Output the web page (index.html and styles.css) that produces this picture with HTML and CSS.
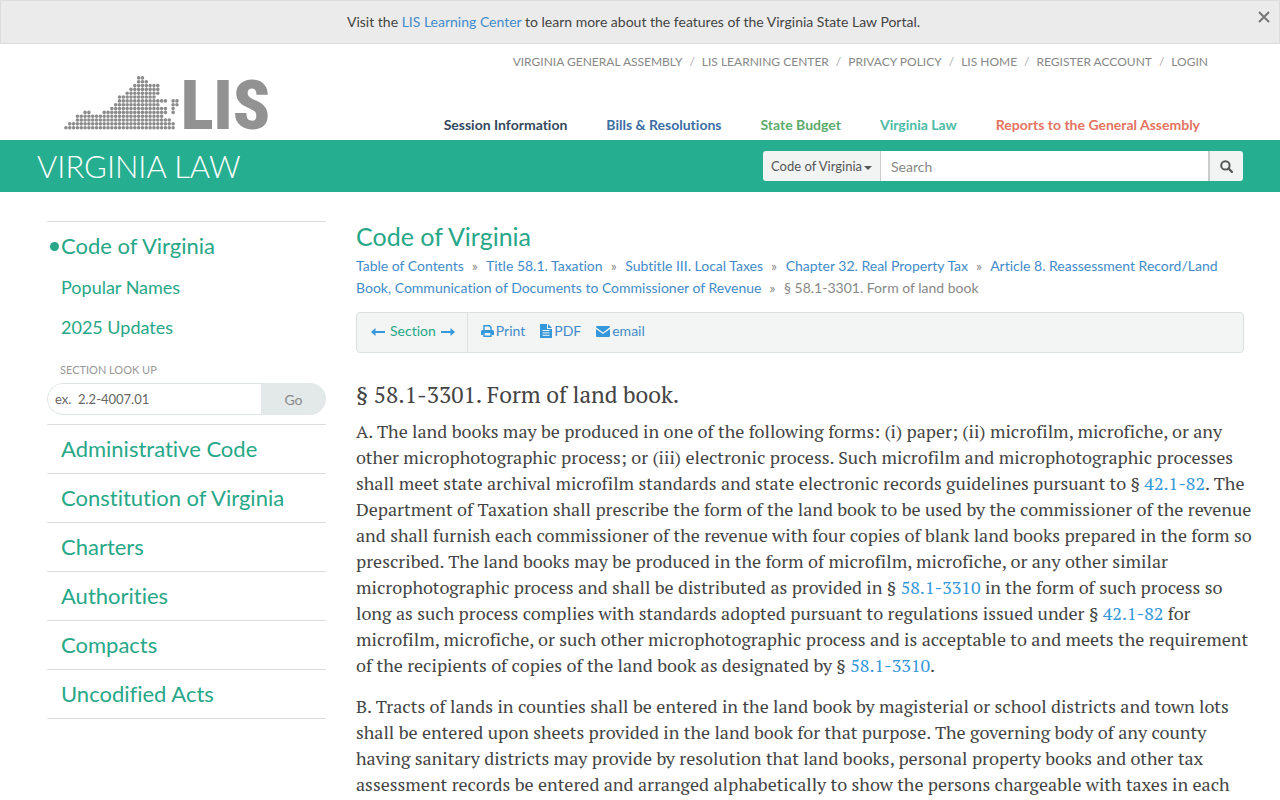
FILE: index.html
```html
<!DOCTYPE html>
<html lang="en">
<head>
  <meta charset="UTF-8" />
  <meta name="viewport" content="width=device-width, initial-scale=1.0"/>
  <title>§ 58.1-3301. Form of land book</title>
  <link rel="stylesheet" href="styles.css">
</head>
<body>
  <div class="announcement">
    <p>Visit the <a href="#">LIS Learning Center</a> to learn more about the features of the Virginia State Law Portal.</p>
    <button type="button" class="close" aria-label="Close">
      <svg width="12" height="12" viewBox="0 0 12 12"><path d="M1 1L11 11M11 1L1 11" stroke="#777" stroke-width="2"/></svg>
    </button>
  </div>

  <header class="header">
    <a href="#" class="logo" aria-label="LIS">
      <!-- dotted state map -->
      <svg class="logo-map" width="116" height="54" viewBox="-5 -5 303 141">
        <path d="M190 0h11M190 10h21M180 20h61M170 30h71M160 40h81M140 50h91M140 60h121M280 60h11M130 70h111M280 70h11M120 80h141M280 80h1M50 90h11M100 90h161M280 90h1M30 100h221M30 110h241M10 120h271M0 130h281" fill="none" stroke="#8c8c8c" stroke-width="9.4" stroke-linecap="round" stroke-dasharray="0 10"/>
      </svg>
      <span class="logo-text">LIS</span>
    </a>
    <div class="header-nav">
      <ul class="top-links">
        <li><a href="#">Virginia General Assembly</a></li>
        <li><a href="#">LIS Learning Center</a></li>
        <li><a href="#">Privacy Policy</a></li>
        <li><a href="#">LIS Home</a></li>
        <li><a href="#">Register Account</a></li>
        <li><a href="#">Login</a></li>
      </ul>
      <nav class="portals">
        <a href="#" class="session">Session Information</a>
        <a href="#" class="bills">Bills &amp; Resolutions</a>
        <a href="#" class="budget">State Budget</a>
        <a href="#" class="law">Virginia Law</a>
        <a href="#" class="reports">Reports to the General Assembly</a>
      </nav>
    </div>
  </header>

  <div class="banner">
    <a href="#" class="banner-title">VIRGINIA LAW</a>
    <form class="search">
      <button type="button" class="search-type">Code of Virginia<span class="caret"></span></button>
      <input type="text" placeholder="Search" aria-label="Search">
      <button type="submit" class="search-go" aria-label="Search">
        <svg width="13" height="13" viewBox="0 0 13 13"><circle cx="5.4" cy="5.4" r="4.2" fill="none" stroke="#555" stroke-width="2"/><path d="M8.5 8.5L12 12" stroke="#555" stroke-width="2.4" stroke-linecap="round"/></svg>
      </button>
    </form>
  </div>

  <div class="page">
    <aside class="sidebar">
      <div class="side-group">
        <a href="#" class="side-link current">Code of Virginia</a>
        <a href="#" class="side-sub">Popular Names</a>
        <a href="#" class="side-sub">2025 Updates</a>
        <form class="lookup">
          <label for="lookup">SECTION LOOK UP</label>
          <div class="lookup-row">
            <input id="lookup" type="text" placeholder="ex.  2.2-4007.01">
            <button type="submit">Go</button>
          </div>
        </form>
      </div>
      <a href="#" class="side-link">Administrative Code</a>
      <a href="#" class="side-link">Constitution of Virginia</a>
      <a href="#" class="side-link">Charters</a>
      <a href="#" class="side-link">Authorities</a>
      <a href="#" class="side-link">Compacts</a>
      <a href="#" class="side-link">Uncodified Acts</a>
    </aside>

    <main class="content">
      <h2>Code of Virginia</h2>
      <div class="breadcrumbs">
        <a href="#">Table of Contents</a><span>»</span>
        <a href="#">Title 58.1. Taxation</a><span>»</span>
        <a href="#">Subtitle III. Local Taxes</a><span>»</span>
        <a href="#">Chapter 32. Real Property Tax</a><span>»</span>
        <a href="#">Article 8. Reassessment Record/Land Book, Communication of Documents to Commissioner of Revenue</a><span>»</span>
        § 58.1-3301. Form of land book
      </div>

      <div class="toolbar">
        <div class="section-nav">
          <a href="#" aria-label="Previous section"><svg width="14" height="8" viewBox="0 0 14 8"><path d="M0 4L4.5 0V3H14V5H4.5V8Z" fill="#3498db"/></svg></a>
          <span>Section</span>
          <a href="#" aria-label="Next section"><svg width="14" height="8" viewBox="0 0 14 8"><path d="M14 4L9.5 0V3H0V5H9.5V8Z" fill="#3498db"/></svg></a>
        </div>
        <div class="tools">
          <a href="#">
            <svg width="13" height="12" viewBox="0 0 13 12"><path d="M3 6V0.8H8.4L10 2.4V6" fill="none" stroke="#3498db" stroke-width="1.4"/><path d="M1.5 5H11.5Q13 5 13 6.5V10H10.5V8H2.5V10H0V6.5Q0 5 1.5 5Z" fill="#3498db"/><path d="M3 8V11.3H10V8" fill="none" stroke="#3498db" stroke-width="1.4"/></svg>
            Print</a>
          <a href="#">
            <svg width="12" height="14" viewBox="0 0 12 14"><path d="M0 0H7V5H12V14H0ZM8 0L12 4H8Z" fill="#3498db"/><path d="M2.5 6.5H9.5M2.5 8.9H9.5M2.5 11.3H9.5" stroke="#f2f5f4"/></svg>
            PDF</a>
          <a href="#">
            <svg width="14" height="11" viewBox="0 0 14 11"><path d="M0 1Q0 0 1 0H13Q14 0 14 1.3L7 6.5L0 1.3ZM0 3L7 8L14 3V10Q14 11 13 11H1Q0 11 0 10Z" fill="#3498db"/></svg>
            email</a>
        </div>
      </div>

      <article class="statute">
        <h1>§ 58.1-3301. Form of land book.</h1>
        <p>A. The land books may be produced in one of the following forms: (i) paper; (ii) microfilm, microfiche, or any other microphotographic process; or (iii) electronic process. Such microfilm and microphotographic processes shall meet state archival microfilm standards and state electronic records guidelines pursuant to § <a href="#">42.1-82</a>. The Department of Taxation shall prescribe the form of the land book to be used by the commissioner of the revenue and shall furnish each commissioner of the revenue with four copies of blank land books prepared in the form so prescribed. The land books may be produced in the form of microfilm, microfiche, or any other similar microphotographic process and shall be distributed as provided in § <a href="#">58.1-3310</a> in the form of such process so long as such process complies with standards adopted pursuant to regulations issued under § <a href="#">42.1-82</a> for microfilm, microfiche, or such other microphotographic process and is acceptable to and meets the requirement of the recipients of copies of the land book as designated by § <a href="#">58.1-3310</a>.</p>
        <p>B. Tracts of lands in counties shall be entered in the land book by magisterial or school districts and town lots shall be entered upon sheets provided in the land book for that purpose. The governing body of any county having sanitary districts may provide by resolution that land books, personal property books and other tax assessment records be entered and arranged alphabetically to show the persons chargeable with taxes in each</p>
      </article>
    </main>
  </div>
</body>
</html>
```
FILE: styles.css
```css
* {
  box-sizing: border-box;
}

body {
  margin: 0;
  font-family: Lato, sans-serif;
  font-size: 14px;
  font-variant-ligatures: none;
  color: #444;
  background: #fff;
}

a {
  color: #428bca;
  text-decoration: none;
}

button, input {
  font-family: inherit;
  font-size: 14px;
}

.announcement {
  display: flex;
  height: 44px;
  background: #ebebeb;
  border: 1px solid #dcdcdc;
}

.announcement p {
  flex: 1;
  margin: 0;
  padding-left: 8px;
  line-height: 42px;
  text-align: center;
}

.close {
  display: flex;
  padding: 10px 9px 0 0;
  border: none;
  background: none;
  cursor: pointer;
}

.header {
  display: flex;
  justify-content: space-between;
  height: 96px;
  padding: 0 72px 0 64px;
}

.logo {
  display: flex;
  align-items: flex-end;
  gap: 1px;
  padding-bottom: 10px;
}

.logo-text {
  font-family: "Roboto Condensed", "Open Sans Condensed", Lato, sans-serif;
  font-size: 68px;
  font-weight: 900;
  line-height: 47px;
  color: #929292;
}

.header-nav {
  display: flex;
  flex-direction: column;
  justify-content: space-between;
  align-items: flex-end;
  padding: 10px 0 6px;
}

.top-links {
  display: flex;
  margin: 0;
  padding: 0;
  list-style: none;
  font-size: 12px;
  line-height: 16px;
  text-transform: uppercase;
}

.top-links a {
  color: #888;
}

.top-links li + li::before {
  content: "/";
  padding: 0 7px;
  color: #aaa;
}

.portals {
  display: flex;
  gap: 39px;
  padding-right: 8px;
  font-weight: bold;
  line-height: 18px;
}

.session { color: #34495e; }
.bills { color: #3c6ea5; }
.budget { color: #5cab6b; }
.law { color: #4dbba5; }
.reports { color: #e57361; }

.banner {
  display: flex;
  justify-content: space-between;
  align-items: center;
  height: 52px;
  padding: 0 37px;
  background: #26ae90;
}

.banner-title {
  font-size: 31px;
  font-weight: 300;
  color: #fff;
}

.search {
  display: flex;
  width: 480px;
  height: 30px;
  border-radius: 3px;
  overflow: hidden;
}

.search button {
  border: none;
  background: #f2f4f4;
  color: #555;
  white-space: nowrap;
}

.search input {
  flex: 1;
  min-width: 0;
  padding: 0 10px;
  border: solid #ccc;
  border-width: 0 2px 0 1px;
}

.search input::placeholder {
  color: #888;
}

.search .search-type {
  padding: 0 8px;
  font-size: 13px;
}

.caret {
  display: inline-block;
  margin-left: 2px;
  vertical-align: middle;
  border: 4px solid transparent;
  border-top-color: #555;
  border-bottom: none;
}

.search-go {
  display: flex;
  align-items: center;
  padding: 0 10px;
}

.page {
  display: flex;
  gap: 30px;
  padding: 29px 28px 0 47px;
}

.sidebar {
  width: 279px;
  flex-shrink: 0;
}

.side-group {
  padding-bottom: 9px;
  border-top: 1px solid #ddd;
}

.side-link {
  display: block;
  padding-left: 14px;
  border-top: 1px solid #ddd;
  font-size: 22px;
  line-height: 48px;
  color: #26a787;
}

.side-link:last-child {
  border-bottom: 1px solid #ddd;
}

.side-link.current {
  display: flex;
  align-items: center;
  gap: 2px;
  padding-left: 3px;
  border-top: none;
}

.side-link.current::before {
  content: "";
  width: 9px;
  height: 9px;
  border-radius: 50%;
  background: #26a787;
}

.side-sub {
  display: block;
  padding-left: 14px;
  font-size: 18px;
  line-height: 40px;
  color: #26a787;
}

.side-link.current + .side-sub {
  margin-top: -3px;
}

.lookup label {
  display: block;
  padding: 15px 0 5px 13px;
  font-size: 11px;
  line-height: 16px;
  color: #999;
}

.lookup-row {
  display: flex;
  height: 32px;
  border-radius: 16px;
  overflow: hidden;
}

.lookup-row input {
  flex: 1;
  min-width: 0;
  padding: 0 7px;
  border: 1px solid #dfe5e5;
  border-right: none;
  border-radius: 16px 0 0 16px;
  font-size: 13px;
}

.lookup-row input::placeholder {
  color: #666;
  white-space: pre;
}

.lookup-row button {
  width: 65px;
  border: none;
  background: #e3e8e8;
  color: #888;
}

.content {
  flex: 1;
  min-width: 0;
}

.content h2 {
  margin: 0 0 4px;
  font-size: 25px;
  font-weight: normal;
  line-height: 30px;
  color: #26a787;
}

.breadcrumbs {
  padding-right: 20px;
  line-height: 22px;
  color: #888;
}

.breadcrumbs span {
  padding: 0 5px 0 8px;
}

.toolbar {
  display: flex;
  height: 41px;
  margin: 13px 8px 26px 0;
  border: 1px solid #dbe1e1;
  border-radius: 4px;
  background: #f2f5f4;
  line-height: 36px;
}

.section-nav {
  display: flex;
  gap: 5px;
  padding: 0 12px 0 14px;
  border-right: 1px solid #dbe1e1;
  color: #26a787;
}

.tools {
  display: flex;
  gap: 15px;
  padding-left: 13px;
}

.tools a {
  display: flex;
  align-items: center;
  gap: 2px;
  height: 36px;
}

.statute {
  font-family: "PT Serif", "Liberation Serif", serif;
  font-size: 18px;
  line-height: 26px;
}

.statute h1 {
  margin: 0 0 7px;
  font-size: 23px;
  font-weight: normal;
  line-height: 32px;
}

.statute p {
  margin: 0 0 15px;
}

.statute a {
  color: #3498db;
}
```
